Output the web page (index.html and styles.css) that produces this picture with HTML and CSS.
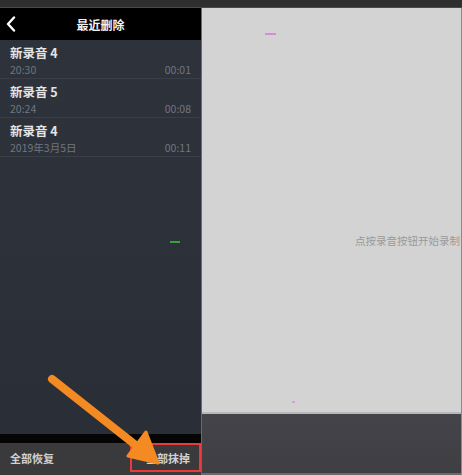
FILE: index.html
```html
<!DOCTYPE html>
<html>
	<head>
		<meta charset="UTF-8">
		<title>最近删除</title>
		<link rel="stylesheet" href="styles.css">
	</head>
	<body>
		<div class="screen">
			<div class="topbar"></div>
			<div class="main">
				<div class="left">
					<div class="head">
						<span class="back">
							<svg width="10" height="16" viewBox="0 0 10 16"><path d="M8 1.5L2 8l6 6.5" fill="none" stroke="#fff" stroke-width="2.4" stroke-linecap="round" stroke-linejoin="round"/></svg>
						</span>
						<span class="title">最近删除</span>
					</div>
					<div class="list">
						<div class="item">
							<div class="name">新录音 4</div>
							<div class="meta"><span>20:30</span><span>00:01</span></div>
						</div>
						<div class="item">
							<div class="name">新录音 5</div>
							<div class="meta"><span>20:24</span><span>00:08</span></div>
						</div>
						<div class="item">
							<div class="name">新录音 4</div>
							<div class="meta"><span>2019年3月5日</span><span>00:11</span></div>
						</div>
					</div>
					<div class="blackbar"></div>
					<div class="foot">
						<span>全部恢复</span>
						<span class="erase">全部抹掉</span>
					</div>
				</div>
				<div class="right">
					<div class="canvas">
						<span class="hint">点按录音按钮开始录制</span>
					</div>
					<div class="dock"></div>
				</div>
			</div>
			<!-- 标注 -->
			<div class="dash pink"></div>
			<div class="dash green"></div>
			<div class="dot"></div>
			<div class="redbox"></div>
			<svg class="arrow" width="462" height="475" viewBox="0 0 462 475">
				<path d="M52 379L138 447" stroke="#f48a22" stroke-width="8" stroke-linecap="round"/>
				<path d="M158 463L128 456L146 432Z" fill="#f48a22" stroke="#f48a22" stroke-width="3" stroke-linejoin="round"/>
			</svg>
		</div>
	</body>
</html>
```
FILE: styles.css
```css
* {
	box-sizing: border-box;
}

body {
	margin: 0;
	font-family: "Noto Sans CJK SC", "Noto Sans", sans-serif;
}

.screen {
	position: relative;
	width: 462px;
	height: 475px;
	background: #2f2f2f;
	overflow: hidden;
	display: flex;
	flex-direction: column;
}

.topbar {
	height: 8px;
	background: #2f2f2f;
	border-bottom: 1px solid #4a4a4a;
}

.main {
	flex: 1;
	display: flex;
}

.left {
	width: 201px;
	display: flex;
	flex-direction: column;
	background: #2d3139;
}

.head {
	height: 32px;
	background: #000;
	position: relative;
	display: flex;
	align-items: center;
	justify-content: center;
}

.back {
	position: absolute;
	left: 6px;
	top: 8px;
	line-height: 0;
}

.title {
	color: #f2f2f2;
	font-size: 12px;
	font-weight: bold;
}

.list {
	flex: 1;
	background: linear-gradient(#2e323a, #2c3038 60%, #2a2e36);
}

.item {
	height: 39px;
	padding: 4px 10px 0 10px;
	border-bottom: 1px solid #3a3e46;
}

.name {
	color: #e4e4e4;
	font-size: 12.5px;
	font-weight: bold;
	line-height: 18px;
}

.meta {
	display: flex;
	justify-content: space-between;
	color: #6f7782;
	font-size: 10.5px;
	line-height: 15px;
}

.blackbar {
	height: 9px;
	background: #050505;
}

.foot {
	height: 32px;
	background: #3a3a3c;
	display: flex;
	justify-content: space-between;
	align-items: center;
	padding: 0 11px 2px 10px;
	color: #d0d0d0;
	font-size: 11px;
	font-weight: bold;
}

.right {
	flex: 1;
	display: flex;
	flex-direction: column;
	border-left: 1px solid #6a6a6a;
	border-right: 1px solid #8a8a8a;
}

.canvas {
	height: 406px;
	background: #d3d3d3;
	border-bottom: 2px solid #b8b8b8;
	display: flex;
	align-items: center;
	justify-content: flex-end;
	padding-top: 60px;
}

.hint {
	color: #9a9a9a;
	font-size: 10.5px;
	margin-right: 1px;
	white-space: nowrap;
}

.dock {
	flex: 1;
	background: linear-gradient(#44444a, #3e3e43);
	border-bottom: 2px solid #6a6a6a;
}

.dash {
	position: absolute;
	height: 2px;
}

.pink {
	left: 265px;
	top: 33px;
	width: 11px;
	background: #d88ad8;
}

.green {
	left: 170px;
	top: 241px;
	width: 10px;
	background: #3aa03a;
}

.dot {
	position: absolute;
	left: 292px;
	top: 401px;
	width: 3px;
	height: 2px;
	background: #d8a0d8;
}

.redbox {
	position: absolute;
	left: 130px;
	top: 443px;
	width: 71px;
	height: 29px;
	border: 2px solid #ec3a3a;
}

.arrow {
	position: absolute;
	left: 0;
	top: 0;
}
```
